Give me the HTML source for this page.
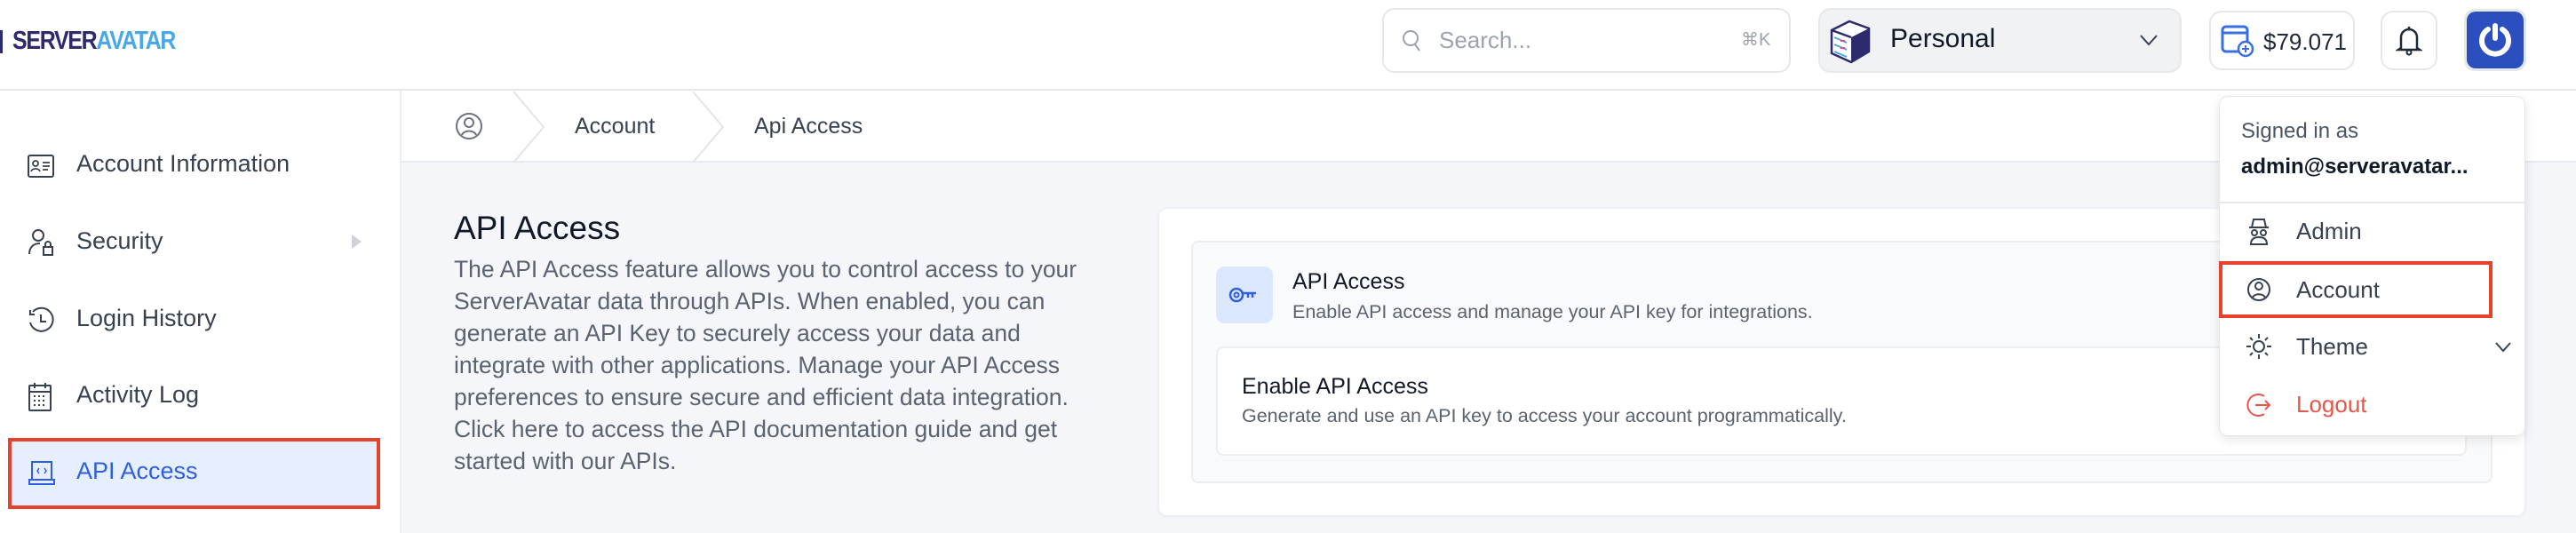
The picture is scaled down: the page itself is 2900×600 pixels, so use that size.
<!DOCTYPE html>
<html><head><meta charset="utf-8">
<style>
*{box-sizing:border-box;margin:0;padding:0}
body{width:2900px;height:600px;overflow:hidden;background:#fff;font-family:"Liberation Sans",sans-serif;color:#1f2937;position:relative}
.abs{position:absolute}
.hdr{left:0;top:0;width:2900px;height:102px;border-bottom:2px solid #e5e7eb;background:#fff}
.box{border:2px solid #e5e7eb;border-radius:14px;background:#fff}
.side{left:0;top:102px;width:452px;height:498px;border-right:2px solid #eceef2;background:#fff}
.item{position:absolute;left:86px;font-size:27px;color:#374151}
.ic{position:absolute;left:31px}
.content{left:452px;top:183px;width:2448px;height:417px;background:#f5f6fa}
.bc{left:452px;top:102px;width:2448px;height:81px;border-bottom:2px solid #e8eaee;background:#fff}
p.par{font-size:26.5px;line-height:36px;color:#5b6270}
.menu{font-size:26px;color:#374151;position:absolute;left:2585px}
</style></head><body>
<div class="abs hdr"></div>
<div class="abs" style="left:0;top:34px;width:3px;height:26px;background:#2d2a6e"></div>
<div class="abs" style="left:14px;top:30px;font-size:29px;font-weight:bold;letter-spacing:-1.5px;transform:scaleX(0.86);transform-origin:left;white-space:nowrap"><span style="color:#2d2a6e">SERVER</span><span style="color:#4aa8e8">AVATAR</span></div>

<div class="abs box" style="left:1556px;top:9px;width:460px;height:73px"></div>
<svg class="abs" style="left:1578px;top:32px" width="24" height="28" viewBox="0 0 24 28"><circle cx="10" cy="11" r="8" fill="none" stroke="#9ca3af" stroke-width="2"/><path d="M15 18l5 7" stroke="#9ca3af" stroke-width="2"/></svg>
<div class="abs" style="left:1620px;top:30px;font-size:26px;color:#9ca3af">Search...</div>
<div class="abs" style="left:1960px;top:32px;font-size:20px;color:#9ca3af">⌘K</div>

<div class="abs" style="left:2047px;top:9px;width:409px;height:73px;background:#f1f2f4;border:2px solid #e7e8eb;border-radius:14px"></div>
<svg class="abs" style="left:2058px;top:20px" width="50" height="52" viewBox="0 0 50 52"><path d="M4 14 L24 4 L46 12 L46 38 L26 50 L4 40Z" fill="#fff" stroke="#2d2a6e" stroke-width="2.5"/><path d="M26 22 L46 12 L46 38 L26 50Z" fill="#2d2a6e"/><path d="M4 14 L26 22" stroke="#2d2a6e" stroke-width="2.5"/><path d="M7 22l14 6M7 30l14 6M7 38l14 6" stroke="#4aa8e8" stroke-width="2"/><path d="M14 26h5M14 34h5" stroke="#e84a8a" stroke-width="2"/></svg>
<div class="abs" style="left:2128px;top:27px;font-size:30px;color:#111827">Personal</div>
<svg class="abs" style="left:2408px;top:38px" width="22" height="14" viewBox="0 0 22 14"><path d="M2 2l9 10 9-10" fill="none" stroke="#374151" stroke-width="2"/></svg>

<div class="abs box" style="left:2487px;top:12px;width:164px;height:67px"></div>
<svg class="abs" style="left:2500px;top:27px" width="40" height="38" viewBox="0 0 40 38"><rect x="2" y="3" width="28" height="28" rx="4" fill="none" stroke="#3b6fe0" stroke-width="3"/><path d="M2 10h28" stroke="#3b6fe0" stroke-width="3"/><circle cx="28" cy="28" r="8" fill="#fff" stroke="#3b6fe0" stroke-width="2.5"/><path d="M28 24v8M24 28h8" stroke="#3b6fe0" stroke-width="2"/></svg>
<div class="abs" style="left:2548px;top:32px;font-size:26px;color:#1f2937">$79.071</div>

<div class="abs box" style="left:2680px;top:12px;width:64px;height:67px"></div>
<svg class="abs" style="left:2697px;top:28px" width="30" height="36" viewBox="0 0 30 36"><path d="M6 26V14a9 9 0 0 1 18 0v12l3 2H3z" fill="none" stroke="#1f2937" stroke-width="2.5"/><path d="M15 2v3" stroke="#1f2937" stroke-width="2.5"/><circle cx="15" cy="31" r="2.5" fill="none" stroke="#1f2937" stroke-width="2"/></svg>

<div class="abs" style="left:2774px;top:10px;width:70px;height:70px;border-radius:12px;background:#e5e7eb"></div>
<div class="abs" style="left:2777px;top:13px;width:64px;height:64px;border-radius:10px;background:#2c4fc0"></div>
<svg class="abs" style="left:2787px;top:23px" width="44" height="44" viewBox="0 0 44 44"><path d="M14 10 A15 15 0 1 0 30 10" fill="none" stroke="#fff" stroke-width="6" stroke-linecap="round"/><path d="M22 6v14" stroke="#fff" stroke-width="6" stroke-linecap="round"/></svg>

<div class="abs side"></div>
<svg class="ic abs" style="top:174px" width="30" height="26" viewBox="0 0 30 26"><rect x="1" y="1" width="28" height="24" rx="2" fill="none" stroke="#374151" stroke-width="2"/><circle cx="9" cy="10" r="3" fill="none" stroke="#374151" stroke-width="1.8"/><path d="M4 19c1-4 9-4 10 0M17 9h8M17 13h8M17 17h6" stroke="#374151" stroke-width="1.8" fill="none"/></svg>
<div class="item" style="top:169px">Account Information</div>
<svg class="ic abs" style="top:256px" width="32" height="34" viewBox="0 0 32 34"><circle cx="12" cy="9" r="6" fill="none" stroke="#374151" stroke-width="2"/><path d="M2 30c0-8 5-12 12-12" fill="none" stroke="#374151" stroke-width="2"/><rect x="18" y="22" width="10" height="9" fill="none" stroke="#374151" stroke-width="2"/><path d="M20 22v-3a3 3 0 0 1 6 0v3" fill="none" stroke="#374151" stroke-width="2"/></svg>
<div class="item" style="top:256px">Security</div>
<div class="abs" style="left:396px;top:264px;width:0;height:0;border-top:8px solid transparent;border-bottom:8px solid transparent;border-left:11px solid #cfd3d9"></div>
<svg class="ic abs" style="top:345px" width="30" height="32" viewBox="0 0 30 32"><path d="M6 6A13 13 0 1 1 3 18" fill="none" stroke="#374151" stroke-width="2"/><path d="M3 4v5h5" fill="none" stroke="#374151" stroke-width="2"/><path d="M15 9v8h6" fill="none" stroke="#374151" stroke-width="2"/></svg>
<div class="item" style="top:343px">Login History</div>
<svg class="ic abs" style="top:430px" width="28" height="34" viewBox="0 0 28 34"><rect x="2" y="4" width="24" height="28" rx="1" fill="none" stroke="#374151" stroke-width="2"/><path d="M2 11h24M8 1v6M20 1v6" stroke="#374151" stroke-width="2"/><path d="M7 16h2M12 16h2M17 16h2M7 21h2M12 21h2M17 21h2M7 26h2M12 26h2M17 26h2" stroke="#374151" stroke-width="2"/></svg>
<div class="item" style="top:429px">Activity Log</div>

<div class="abs" style="left:9px;top:493px;width:419px;height:80px;background:#e6effd;border:4px solid #e8412c"></div>
<svg class="ic abs" style="top:518px" width="32" height="30" viewBox="0 0 32 30"><rect x="5" y="2" width="22" height="20" fill="none" stroke="#2f5fe0" stroke-width="2"/><path d="M2 22h28v5H2z" fill="none" stroke="#2f5fe0" stroke-width="2"/><path d="M13 9l-2 3 2 3M19 9l2 3-2 3" fill="none" stroke="#2f5fe0" stroke-width="1.5"/></svg>
<div class="item" style="top:515px;color:#2f5fe0">API Access</div>

<div class="abs bc"></div>
<svg class="abs" style="left:512px;top:125px" width="32" height="34" viewBox="0 0 32 34"><circle cx="16" cy="17" r="14" fill="none" stroke="#6b7280" stroke-width="2"/><circle cx="16" cy="13" r="5" fill="none" stroke="#6b7280" stroke-width="2"/><path d="M8 27c2-6 14-6 16 0" fill="none" stroke="#6b7280" stroke-width="2"/></svg>
<svg class="abs" style="left:576px;top:103px" width="40" height="80" viewBox="0 0 40 80"><path d="M2 0 L36 40 L2 80" fill="none" stroke="#e3e5e9" stroke-width="2"/></svg>
<div class="abs" style="left:647px;top:128px;font-size:25px;color:#374151">Account</div>
<svg class="abs" style="left:778px;top:103px" width="40" height="80" viewBox="0 0 40 80"><path d="M2 0 L36 40 L2 80" fill="none" stroke="#e3e5e9" stroke-width="2"/></svg>
<div class="abs" style="left:849px;top:128px;font-size:25px;color:#374151">Api Access</div>

<div class="abs content"></div>
<div class="abs" style="left:511px;top:236px;font-size:37px;color:#111827">API Access</div>
<p class="abs par" style="left:511px;top:285px;width:745px">The API Access feature allows you to control access to your ServerAvatar data through APIs. When enabled, you can generate an API Key to securely access your data and integrate with other applications. Manage your API Access preferences to ensure secure and efficient data integration. Click here to access the API documentation guide and get started with our APIs.</p>

<div class="abs" style="left:1304px;top:234px;width:1539px;height:347px;background:#fff;border:1px solid #eceef1;border-radius:10px;box-shadow:0 1px 3px rgba(0,0,0,.06)"></div>
<div class="abs" style="left:1341px;top:271px;width:1465px;height:273px;background:#f9fafb;border:2px solid #ebedf0;border-radius:8px"></div>
<div class="abs" style="left:1369px;top:300px;width:64px;height:64px;background:#dbe7fe;border-radius:10px"></div>
<svg class="abs" style="left:1383px;top:318px" width="34" height="28" viewBox="0 0 34 28"><circle cx="9" cy="14" r="7" fill="none" stroke="#2f5fe0" stroke-width="2.5"/><circle cx="9" cy="14" r="2.5" fill="none" stroke="#2f5fe0" stroke-width="2"/><path d="M16 12h15M22 12v5M27 12v5" stroke="#2f5fe0" stroke-width="2.5" fill="none"/></svg>
<div class="abs" style="left:1455px;top:303px;font-size:25px;color:#111827">API Access</div>
<div class="abs" style="left:1455px;top:339px;font-size:21.5px;color:#5b6270">Enable API access and manage your API key for integrations.</div>
<div class="abs" style="left:1369px;top:390px;width:1408px;height:123px;background:#fff;border:2px solid #eceef1;border-radius:8px"></div>
<div class="abs" style="left:1398px;top:421px;font-size:25px;color:#111827">Enable API Access</div>
<div class="abs" style="left:1398px;top:456px;font-size:21.5px;color:#5b6270">Generate and use an API key to access your account programmatically.</div>

<div class="abs" style="left:2498px;top:108px;width:345px;height:383px;background:#fff;border:1px solid #e5e7eb;border-radius:10px;box-shadow:0 4px 12px rgba(0,0,0,.1)"></div>
<div class="abs" style="left:2523px;top:134px;font-size:24px;color:#4b5563">Signed in as</div>
<div class="abs" style="left:2523px;top:174px;font-size:24px;font-weight:bold;color:#111827">admin@serveravatar...</div>
<div class="abs" style="left:2498px;top:227px;width:345px;height:2px;background:#e5e7eb"></div>
<svg class="abs" style="left:2530px;top:243px" width="26" height="34" viewBox="0 0 26 34"><path d="M7 4h12l2 9H5z M2 13h22" fill="none" stroke="#374151" stroke-width="2"/><circle cx="8" cy="19" r="3" fill="none" stroke="#374151" stroke-width="2"/><circle cx="18" cy="19" r="3" fill="none" stroke="#374151" stroke-width="2"/><path d="M4 32c0-6 4-8 9-8s9 2 9 8z" fill="none" stroke="#374151" stroke-width="2"/></svg>
<div class="menu" style="top:245px">Admin</div>
<div class="abs" style="left:2498px;top:294px;width:308px;height:64px;border:4px solid #e8412c"></div>
<svg class="abs" style="left:2529px;top:310px" width="28" height="32" viewBox="0 0 28 32"><circle cx="14" cy="16" r="12" fill="none" stroke="#374151" stroke-width="2"/><circle cx="14" cy="12" r="4" fill="none" stroke="#374151" stroke-width="2"/><path d="M7 25c2-5 12-5 14 0" fill="none" stroke="#374151" stroke-width="2"/></svg>
<div class="menu" style="top:311px">Account</div>
<svg class="abs" style="left:2528px;top:375px" width="30" height="30" viewBox="0 0 30 30"><circle cx="15" cy="15" r="6" fill="none" stroke="#374151" stroke-width="2"/><path d="M15 1v5M15 24v5M1 15h5M24 15h5M5 5l3 3M22 22l3 3M5 25l3-3M22 8l3-3" stroke="#374151" stroke-width="2"/></svg>
<div class="menu" style="top:375px">Theme</div>
<svg class="abs" style="left:2808px;top:384px" width="20" height="14" viewBox="0 0 20 14"><path d="M2 2l8 9 8-9" fill="none" stroke="#374151" stroke-width="2"/></svg>
<svg class="abs" style="left:2529px;top:440px" width="28" height="32" viewBox="0 0 28 32"><path d="M20 6A12 12 0 1 0 20 26" fill="none" stroke="#e5574a" stroke-width="2"/><path d="M10 16h16M21 11l5 5-5 5" fill="none" stroke="#e5574a" stroke-width="2"/></svg>
<div class="menu" style="top:440px;color:#e5574a">Logout</div>
</body></html>
